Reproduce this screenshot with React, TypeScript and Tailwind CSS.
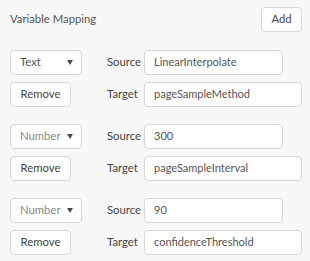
import React from "react";

const rows = [
  { type: "Text", source: "LinearInterpolate", target: "pageSampleMethod", typeDark: true },
  { type: "Number", source: "300", target: "pageSampleInterval", typeDark: false },
  { type: "Number", source: "90", target: "confidenceThreshold", typeDark: false },
];

function Caret() {
  return (
    <svg width="6" height="5" viewBox="0 0 6 5">
      <path d="M0 0 H6 L3 5 Z" fill="#4a4a4a" />
    </svg>
  );
}

export default function App() {
  return (
    <div
      className="w-[310px] h-[261px] bg-[#f8f8f8] text-[11.3px] text-[#444]"
      style={{ fontFamily: 'Lato, "Open Sans", sans-serif' }}
    >
      <div className="flex items-center justify-between pl-[10px] pr-[8px] pt-[7px]">
        <span className="text-[#555]">Variable Mapping</span>
        <button className="h-[25px] w-[41px] rounded-[4px] border border-[#d6d6d6] bg-white text-[#444]">
          Add
        </button>
      </div>
      <div className="flex flex-col gap-[17px] pt-[18px] pl-[10px]">
        {rows.map((r, i) => (
          <div key={i} className="flex">
            <div className="flex w-[72px] flex-col gap-[7px]">
              <div className="flex h-[25px] w-[72px] items-center justify-between rounded-[4px] border border-[#d6d6d6] bg-white pl-[9px] pr-[8px]">
                <span className={r.typeDark ? "text-[#555]" : "text-[#888]"}>{r.type}</span>
                <Caret />
              </div>
              <button className="h-[25px] w-[61px] rounded-[4px] border border-[#d6d6d6] bg-white text-[#444]">
                Remove
              </button>
            </div>
            <div className="ml-[25px] flex flex-col gap-[7px]">
              <div className="flex items-center">
                <span className="w-[37px]">Source</span>
                <div className="flex h-[25px] w-[139px] items-center rounded-[4px] border border-[#d6d6d6] bg-white pl-[9px] text-[11px] text-[#555]">
                  {r.source}
                </div>
              </div>
              <div className="flex items-center">
                <span className="w-[37px]">Target</span>
                <div className="flex h-[25px] w-[158px] items-center rounded-[4px] border border-[#d6d6d6] bg-white pl-[9px] text-[11px] text-[#555]">
                  {r.target}
                </div>
              </div>
            </div>
          </div>
        ))}
      </div>
    </div>
  );
}
